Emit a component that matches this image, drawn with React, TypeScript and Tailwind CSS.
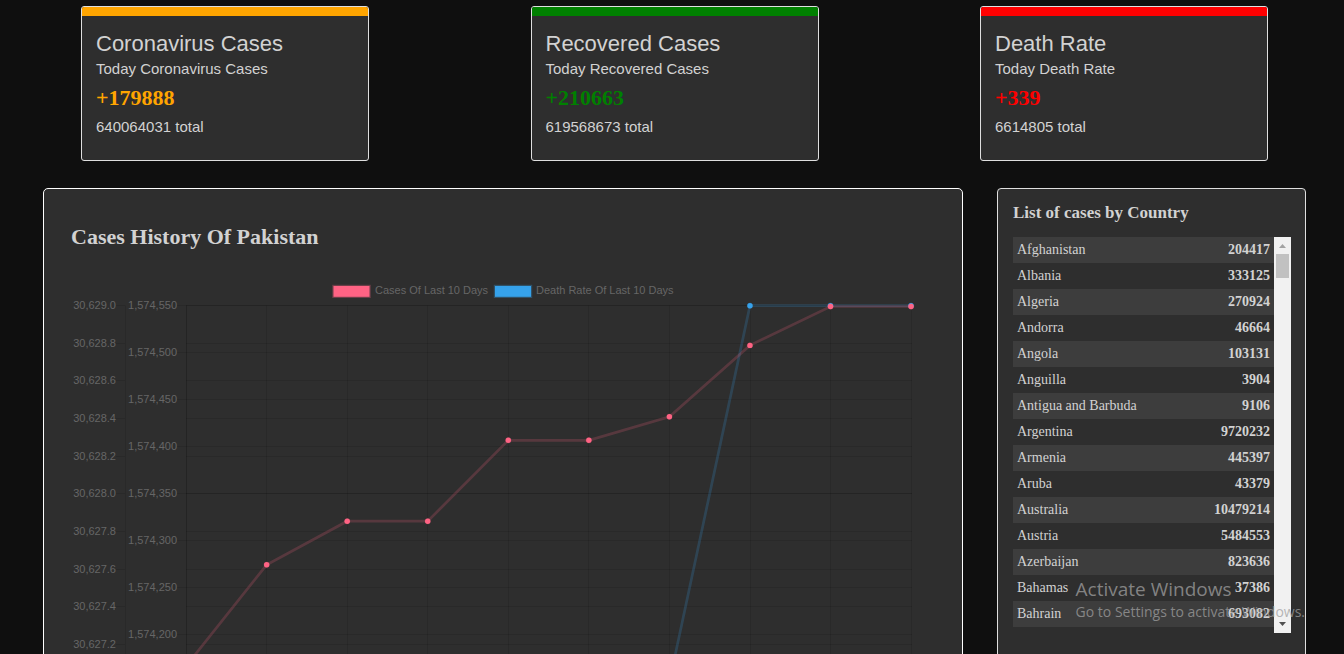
import React from "react";

type Stat = {
  title: string;
  subtitle: string;
  today: string;
  total: string;
  bar: string;
  text: string;
};

const stats: Stat[] = [
  {
    title: "Coronavirus Cases",
    subtitle: "Today Coronavirus Cases",
    today: "+179888",
    total: "640064031 total",
    bar: "bg-[#ffa500]",
    text: "text-[#ffa500]",
  },
  {
    title: "Recovered Cases",
    subtitle: "Today Recovered Cases",
    today: "+210663",
    total: "619568673 total",
    bar: "bg-[#008000]",
    text: "text-[#008000]",
  },
  {
    title: "Death Rate",
    subtitle: "Today Death Rate",
    today: "+339",
    total: "6614805 total",
    bar: "bg-[#ff0000]",
    text: "text-[#ff0000]",
  },
];

const countries: [string, string][] = [
  ["Afghanistan", "204417"],
  ["Albania", "333125"],
  ["Algeria", "270924"],
  ["Andorra", "46664"],
  ["Angola", "103131"],
  ["Anguilla", "3904"],
  ["Antigua and Barbuda", "9106"],
  ["Argentina", "9720232"],
  ["Armenia", "445397"],
  ["Aruba", "43379"],
  ["Australia", "10479214"],
  ["Austria", "5484553"],
  ["Azerbaijan", "823636"],
  ["Bahamas", "37386"],
  ["Bahrain", "693082"],
];

const serif = "font-['Liberation_Serif','Times_New_Roman',serif]";

function StatCard({ stat }: { stat: Stat }) {
  return (
    <article className="w-72 overflow-hidden rounded-[3px] border border-[#dfdfdf] bg-[#2e2e2e]">
      <div className={`h-[9px] ${stat.bar}`} />
      <div className="px-[14px] pt-[14px] pb-[22px]">
        <h2 className="text-[22px] leading-[28px]">{stat.title}</h2>
        <p className="text-[15px] leading-[22px]">{stat.subtitle}</p>
        <p className={`${serif} text-[22px] leading-9 font-bold ${stat.text}`}>{stat.today}</p>
        <p className="text-[15px] leading-[22px]">{stat.total}</p>
      </div>
    </article>
  );
}

// Plot geometry in chart units.
const TOP = 28.5;
const BOTTOM = 405;
const columns = [115.5, 195.5, 276.5, 356.5, 437.5, 517.5, 598.5, 679.5, 759.5, 840.5];
const deathTicks = ["30,629.0", "30,628.8", "30,628.6", "30,628.4", "30,628.2", "30,628.0", "30,627.8", "30,627.6", "30,627.4", "30,627.2"];
const caseTicks = ["1,574,550", "1,574,500", "1,574,450", "1,574,400", "1,574,350", "1,574,300", "1,574,250", "1,574,200"];
const deathY = (i: number) => Math.floor(28.3 + i * 37.7) + 0.5;
const caseY = (i: number) => Math.floor(28 + i * 47.06) + 0.5;
const pointX = (i: number) => 115.1 + i * 80.55;
const casePoints = [389, 287.8, 244.2, 244.2, 163.3, 163.3, 139.8, 68.4, 29.5, 29.5];
const deathPoints = [405, 405, 405, 405, 405, 405, 405, 28.7, 28.7, 28.7];

const toLine = (ys: number[]) => ys.map((y, i) => `${pointX(i)},${y}`).join(" ");

function Series({ ys, color }: { ys: number[]; color: string }) {
  return (
    <g>
      <polyline points={toLine(ys)} fill="none" stroke={color} strokeOpacity="0.2" strokeWidth="2.7" />
      {ys.map((y, i) => (
        <circle key={i} cx={pointX(i)} cy={y} r="2.7" fill={color} stroke={color} strokeOpacity="0.2" />
      ))}
    </g>
  );
}

function HistoryChart() {
  return (
    <svg
      viewBox="0 0 864 432"
      className="block w-full font-['Liberation_Sans',Arial,sans-serif] text-[11px]"
      role="img"
      aria-label="Cases and death rate of the last 10 days"
    >
      <g stroke="#000" strokeOpacity="0.1">
        {deathTicks.map((t, i) => (
          <path key={t} d={`M45 ${deathY(i)}H54${i === 0 ? "" : `M115 ${deathY(i)}H841`}`} />
        ))}
        {caseTicks.map((t, i) => (
          <path key={t} d={`M106 ${caseY(i)}H${i === 0 ? 115 : 841}`} />
        ))}
        <path d={`M54.5 ${TOP}V${BOTTOM}`} />
        {columns.map((x) => (
          <path key={x} d={`M${x} ${TOP}V${BOTTOM + 9}`} />
        ))}
        <path d={`M115.5 ${TOP}V${BOTTOM}`} />
        <path d={`M115 ${TOP}H841`} strokeOpacity="0.2" />
      </g>

      <g fill="#666" textAnchor="end">
        {deathTicks.map((t, i) => (
          <text key={t} x="45" y={deathY(i) + 3.5}>{t}</text>
        ))}
        {caseTicks.map((t, i) => (
          <text key={t} x="106" y={caseY(i) + 3.5}>{t}</text>
        ))}
      </g>

      <Series ys={deathPoints} color="#36a2eb" />
      <Series ys={casePoints} color="#ff6384" />

      <rect x="262.5" y="9" width="36" height="10.8" fill="#ff6384" stroke="#ff6384" strokeOpacity="0.3" strokeWidth="2.4" />
      <rect x="424" y="9" width="36" height="10.8" fill="#36a2eb" stroke="#36a2eb" strokeOpacity="0.3" strokeWidth="2.4" />
      <g fill="#666">
        <text x="304" y="17">Cases Of Last 10 Days</text>
        <text x="465" y="17">Death Rate Of Last 10 Days</text>
      </g>
    </svg>
  );
}

function Scrollbar() {
  return (
    <div aria-hidden="true" className="flex w-[17px] shrink-0 flex-col items-center bg-[#f1f1f1]">
      <svg viewBox="0 0 17 17" className="size-[17px]">
        <path d="M8.5 7L12 11H5z" fill="#a3a3a3" />
      </svg>
      <div className="h-6 w-[13px] bg-[#c1c1c1]" />
      <div className="flex-1" />
      <svg viewBox="0 0 17 17" className="size-[17px]">
        <path d="M8.5 10L12 6H5z" fill="#505050" />
      </svg>
    </div>
  );
}

export default function App() {
  return (
    <div className="relative h-screen overflow-hidden bg-[#0f0f0f] font-['Liberation_Sans',Arial,sans-serif] text-[#d2d2d2]">
      <section className="flex justify-between gap-4 pt-[6px] pr-[76px] pl-[81px]">
        {stats.map((s) => (
          <StatCard key={s.title} stat={s} />
        ))}
      </section>

      <main className="flex items-stretch gap-[34px] pt-[27px] pr-[38px] pl-[43px]">
        <section className="min-w-0 flex-1 rounded-[5px] border border-white bg-[#2e2e2e] px-[27px] pt-9 pb-7">
          <h2 className={`${serif} mb-7 text-[22px] leading-6 font-bold`}>Cases History Of Pakistan</h2>
          <HistoryChart />
        </section>

        <aside className="w-[309px] shrink-0 rounded-[4px] border border-[#dfdfdf] bg-[#2e2e2e] pt-[14px] pr-[14px] pl-[15px]">
          <h3 className={`${serif} mb-[14px] text-[17px] leading-5 font-bold`}>List of cases by Country</h3>
          <div className="flex h-[396px] overflow-hidden">
            <div className="min-w-0 flex-1">
              <table className={`${serif} w-full border-collapse text-[14px] leading-4`}>
                <tbody>
                  {countries.map(([name, count]) => (
                    <tr key={name} className="h-[26px] odd:bg-[#3d3d3d]">
                      <td className="px-1 py-0">{name}</td>
                      <td className="px-1 py-0 text-right font-bold">{count}</td>
                    </tr>
                  ))}
                </tbody>
              </table>
            </div>
            <Scrollbar />
          </div>
        </aside>
      </main>

      <div className="pointer-events-none absolute right-[39px] bottom-[31px] font-['Open_Sans','Noto_Sans',sans-serif] whitespace-nowrap text-[#a0a0a0]/75">
        <p className="text-[19px] leading-6">Activate Windows</p>
        <p className="text-[14px] leading-[22px]">Go to Settings to activate Windows.</p>
      </div>
    </div>
  );
}
